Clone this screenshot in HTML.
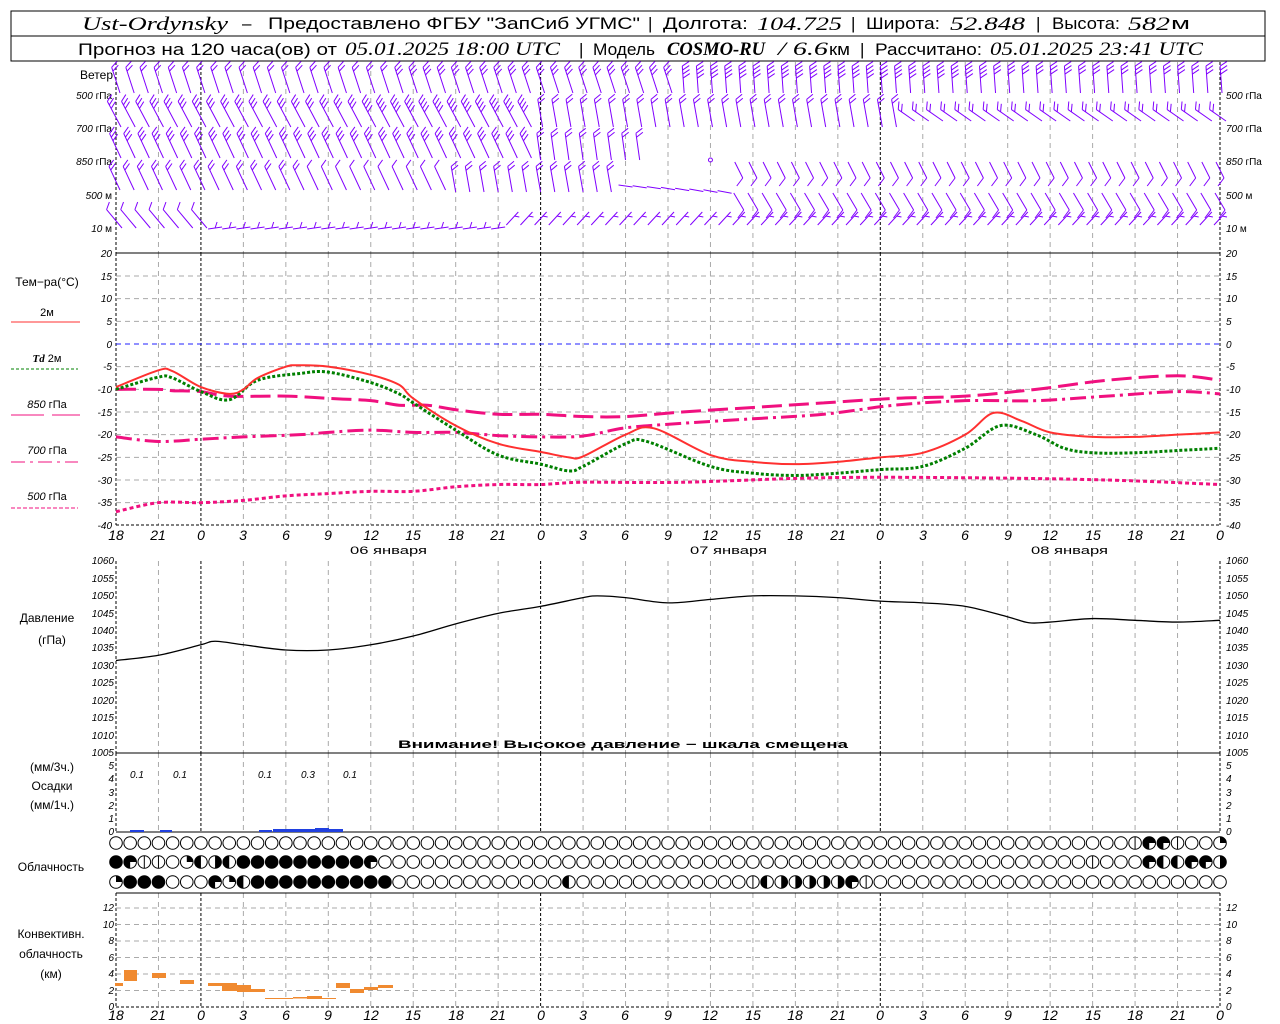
<!DOCTYPE html>
<html><head><meta charset="utf-8"><style>
body{margin:0;background:#fff;width:1280px;height:1024px;overflow:hidden;font-family:"Liberation Sans",sans-serif}
svg{position:absolute;left:0;top:0}
.t{font-family:"Liberation Sans",sans-serif;font-size:11px;fill:#000}
.n{font-family:"Liberation Sans",sans-serif;font-size:10px;font-style:italic;fill:#000}
.h{font-family:"Liberation Sans",sans-serif;font-size:14px;font-style:italic;fill:#000}
.hd{font-family:"Liberation Sans",sans-serif;font-size:17px;fill:#000}
.hi{font-family:"Liberation Serif",serif;font-size:19px;font-style:italic;fill:#000}
</style></head><body>
<svg id="s" width="1280" height="1024" xmlns="http://www.w3.org/2000/svg">
<g id="grid"></g>
<rect x="11" y="11" width="1254" height="50" fill="none" stroke="#000"/>
<line x1="11" y1="36" x2="1265" y2="36" stroke="#000"/>
<g lengthAdjust="spacingAndGlyphs">
<text x="82" y="30" class="hi" textLength="146" lengthAdjust="spacingAndGlyphs">Ust-Ordynsky</text>
<text x="242" y="29" class="hd">–</text>
<text x="268" y="29" class="hd" textLength="372" lengthAdjust="spacingAndGlyphs">Предоставлено ФГБУ "ЗапСиб УГМС"</text>
<text x="648" y="29" class="hd">|</text>
<text x="663" y="29" class="hd" textLength="85" lengthAdjust="spacingAndGlyphs">Долгота:</text>
<text x="757" y="30" class="hi" textLength="85" lengthAdjust="spacingAndGlyphs">104.725</text>
<text x="851" y="29" class="hd">|</text>
<text x="866" y="29" class="hd" textLength="74" lengthAdjust="spacingAndGlyphs">Широта:</text>
<text x="950" y="30" class="hi" textLength="75" lengthAdjust="spacingAndGlyphs">52.848</text>
<text x="1036" y="29" class="hd">|</text>
<text x="1052" y="29" class="hd" textLength="68" lengthAdjust="spacingAndGlyphs">Высота:</text>
<text x="1128" y="30" class="hi" textLength="42" lengthAdjust="spacingAndGlyphs">582</text>
<text x="1171" y="29" class="hd" textLength="19" lengthAdjust="spacingAndGlyphs">м</text>
<text x="78" y="55" class="hd" font-size="16" textLength="259" lengthAdjust="spacingAndGlyphs">Прогноз на 120 часа(ов) от</text>
<text x="345" y="55" class="hi" font-size="18" textLength="215" lengthAdjust="spacingAndGlyphs">05.01.2025 18:00 UTC</text>
<text x="579" y="55" class="hd" font-size="16">|</text>
<text x="593" y="55" class="hd" font-size="16" textLength="62" lengthAdjust="spacingAndGlyphs">Модель</text>
<text x="667" y="55" class="hi" font-style="normal" font-weight="bold" font-size="17" textLength="98" lengthAdjust="spacingAndGlyphs">COSMO-RU</text>
<text x="778" y="55" class="hi" font-size="18" textLength="50" lengthAdjust="spacingAndGlyphs">/ 6.6</text>
<text x="829" y="55" class="hd" font-size="16" textLength="21" lengthAdjust="spacingAndGlyphs">км</text>
<text x="860" y="55" class="hd" font-size="16">|</text>
<text x="875" y="55" class="hd" font-size="16" textLength="107" lengthAdjust="spacingAndGlyphs">Рассчитано:</text>
<text x="990" y="55" class="hi" font-size="18" textLength="213" lengthAdjust="spacingAndGlyphs">05.01.2025 23:41 UTC</text>
</g>

<g class="t" text-anchor="end">
<text x="113" y="79" font-size="12">Ветер</text>
<text x="112" y="99" class="n">500 <tspan font-style="normal">гПа</tspan></text>
<text x="112" y="132" class="n">700 <tspan font-style="normal">гПа</tspan></text>
<text x="112" y="165" class="n">850 <tspan font-style="normal">гПа</tspan></text>
<text x="112" y="199" class="n">500 <tspan font-style="normal">м</tspan></text>
<text x="112" y="232" class="n">10  <tspan font-style="normal">м</tspan></text>
</g>
<g class="n">
<text x="1226" y="99">500 <tspan font-style="normal">гПа</tspan></text>
<text x="1226" y="132">700 <tspan font-style="normal">гПа</tspan></text>
<text x="1226" y="165">850 <tspan font-style="normal">гПа</tspan></text>
<text x="1226" y="199">500 <tspan font-style="normal">м</tspan></text>
<text x="1226" y="232">10  <tspan font-style="normal">м</tspan></text>
</g>
<g class="t" text-anchor="middle">
<text x="47" y="286" font-size="12">Тем−ра(°C)</text>
<text x="47" y="316">2м</text>
<text x="47" y="362"><tspan font-style="italic" font-weight="bold" font-family="Liberation Serif">Td</tspan>  2м</text>
<text x="47" y="408"><tspan font-style="italic">850</tspan> гПа</text>
<text x="47" y="454"><tspan font-style="italic">700</tspan> гПа</text>
<text x="47" y="500"><tspan font-style="italic">500</tspan> гПа</text>
<text x="47" y="622" font-size="12">Давление</text>
<text x="52" y="644" font-size="12">(гПа)</text>
<text x="52" y="771" font-size="12">(мм/3ч.)</text>
<text x="52" y="790" font-size="12">Осадки</text>
<text x="52" y="809" font-size="12">(мм/1ч.)</text>
<text x="51" y="871" font-size="12">Облачность</text>
<text x="51" y="938" font-size="12">Конвективн.</text>
<text x="51" y="958" font-size="12">облачность</text>
<text x="51" y="978" font-size="12">(км)</text>
</g>
<line x1="11" y1="322" x2="80" y2="322" stroke="#ff3030" stroke-width="1"/>
<line x1="11" y1="369" x2="78" y2="369" stroke="#008000" stroke-dasharray="3,2"/>
<line x1="11" y1="415" x2="44" y2="415" stroke="#f0107f"/><line x1="52" y1="415" x2="80" y2="415" stroke="#f0107f"/>
<line x1="11" y1="462" x2="78" y2="462" stroke="#f0107f" stroke-dasharray="14,5,3,5"/>
<line x1="11" y1="508" x2="78" y2="508" stroke="#f0107f" stroke-dasharray="4,2"/>
<g class="n" text-anchor="end">
<text x="112" y="257">20</text><text x="112" y="280">15</text><text x="112" y="302">10</text><text x="112" y="325">5</text><text x="112" y="348">0</text><text x="112" y="370">-5</text><text x="112" y="393">-10</text><text x="112" y="416">-15</text><text x="112" y="438">-20</text><text x="112" y="461">-25</text><text x="112" y="484">-30</text><text x="112" y="506">-35</text><text x="112" y="529">-40</text>
</g>
<g class="n">
<text x="1226" y="257">20</text><text x="1226" y="280">15</text><text x="1226" y="302">10</text><text x="1226" y="325">5</text><text x="1226" y="348">0</text><text x="1226" y="370">-5</text><text x="1226" y="393">-10</text><text x="1226" y="416">-15</text><text x="1226" y="438">-20</text><text x="1226" y="461">-25</text><text x="1226" y="484">-30</text><text x="1226" y="506">-35</text><text x="1226" y="529">-40</text>
</g>
<g class="n" font-size="9" text-anchor="end">
<text x="114" y="564">1060</text><text x="114" y="582">1055</text><text x="114" y="599">1050</text><text x="114" y="617">1045</text><text x="114" y="634">1040</text><text x="114" y="651">1035</text><text x="114" y="669">1030</text><text x="114" y="686">1025</text><text x="114" y="704">1020</text><text x="114" y="721">1015</text><text x="114" y="739">1010</text><text x="114" y="756">1005</text>
<text x="114" y="769">5</text><text x="114" y="782">4</text><text x="114" y="796">3</text><text x="114" y="809">2</text><text x="114" y="822">1</text><text x="114" y="835">0</text>
<text x="114" y="911">12</text><text x="114" y="928">10</text><text x="114" y="944">8</text><text x="114" y="961">6</text><text x="114" y="977">4</text><text x="114" y="994">2</text><text x="114" y="1010">0</text>
</g>
<g class="n" font-size="9">
<text x="1226" y="564">1060</text><text x="1226" y="582">1055</text><text x="1226" y="599">1050</text><text x="1226" y="617">1045</text><text x="1226" y="634">1040</text><text x="1226" y="651">1035</text><text x="1226" y="669">1030</text><text x="1226" y="686">1025</text><text x="1226" y="704">1020</text><text x="1226" y="721">1015</text><text x="1226" y="739">1010</text><text x="1226" y="756">1005</text>
<text x="1226" y="769">5</text><text x="1226" y="782">4</text><text x="1226" y="796">3</text><text x="1226" y="809">2</text><text x="1226" y="822">1</text><text x="1226" y="835">0</text>
<text x="1226" y="911">12</text><text x="1226" y="928">10</text><text x="1226" y="944">8</text><text x="1226" y="961">6</text><text x="1226" y="977">4</text><text x="1226" y="994">2</text><text x="1226" y="1010">0</text>
</g>
<g class="h" text-anchor="middle">
<text x="116" y="540">18</text><text x="158" y="540">21</text><text x="201" y="540">0</text><text x="243" y="540">3</text><text x="286" y="540">6</text><text x="328" y="540">9</text><text x="371" y="540">12</text><text x="413" y="540">15</text><text x="456" y="540">18</text><text x="498" y="540">21</text><text x="541" y="540">0</text><text x="583" y="540">3</text><text x="625" y="540">6</text><text x="668" y="540">9</text><text x="710" y="540">12</text><text x="753" y="540">15</text><text x="795" y="540">18</text><text x="838" y="540">21</text><text x="880" y="540">0</text><text x="923" y="540">3</text><text x="965" y="540">6</text><text x="1008" y="540">9</text><text x="1050" y="540">12</text><text x="1093" y="540">15</text><text x="1135" y="540">18</text><text x="1178" y="540">21</text><text x="1220" y="540">0</text>
</g>
<g class="h" text-anchor="middle">
<text x="116" y="1020">18</text><text x="158" y="1020">21</text><text x="201" y="1020">0</text><text x="243" y="1020">3</text><text x="286" y="1020">6</text><text x="328" y="1020">9</text><text x="371" y="1020">12</text><text x="413" y="1020">15</text><text x="456" y="1020">18</text><text x="498" y="1020">21</text><text x="541" y="1020">0</text><text x="583" y="1020">3</text><text x="625" y="1020">6</text><text x="668" y="1020">9</text><text x="710" y="1020">12</text><text x="753" y="1020">15</text><text x="795" y="1020">18</text><text x="838" y="1020">21</text><text x="880" y="1020">0</text><text x="923" y="1020">3</text><text x="965" y="1020">6</text><text x="1008" y="1020">9</text><text x="1050" y="1020">12</text><text x="1093" y="1020">15</text><text x="1135" y="1020">18</text><text x="1178" y="1020">21</text><text x="1220" y="1020">0</text>
</g>
<g class="t" font-size="12">
<text x="350" y="554" textLength="77" lengthAdjust="spacingAndGlyphs">06 января</text><text x="690" y="554" textLength="77" lengthAdjust="spacingAndGlyphs">07 января</text><text x="1031" y="554" textLength="77" lengthAdjust="spacingAndGlyphs">08 января</text>
</g>
<text x="398" y="748" class="t" font-size="14" font-weight="bold" textLength="450" lengthAdjust="spacingAndGlyphs">Внимание! Высокое давление − шкала смещена</text>
<g class="n" font-size="13" text-anchor="middle">
<text x="137" y="778">0.1</text><text x="180" y="778">0.1</text><text x="265" y="778">0.1</text><text x="308" y="778">0.3</text><text x="350" y="778">0.1</text>
</g>
<g id="g2"></g>
</svg>
<script>
var NS="http://www.w3.org/2000/svg",G=document.getElementById("grid"),G2=document.getElementById("g2");
function X(h){return 116+h*14.1538}
function el(p,t,a){var e=document.createElementNS(NS,t);for(var k in a)e.setAttribute(k,a[k]);p.appendChild(e);return e}
function L(p,x1,y1,x2,y2,c,w,d){var a={x1:x1,y1:y1,x2:x2,y2:y2,stroke:c,"stroke-width":w||1};if(d)a["stroke-dasharray"]=d;return el(p,"line",a)}
var panels=[[62,253],[253,525],[561,753],[753,832],[893,1007]];
panels.forEach(function(p){for(var h=0;h<=78;h+=3){var day=(h==6||h==30||h==54||h==0||h==78);L(G,X(h),p[0],X(h),p[1],day?"#000":"#aaa",1,day?"3,2":"5,4")}});
for(var t=15;t>=-35;t-=5){var y=344-t*4.533;L(G,116,y,1220,y,t==0?"#2020ff":"#aaa",1,"5,4")}
for(var k=2;k<=12;k+=2){var y=1007-k*8.25;L(G,116,y,1220,y,"#aaa",1,"5,4")}
[253,753,832,893].forEach(function(y){L(G,116,y,1220,y,"#000",1)});
L(G,116,525,1220,525,"#000",1,"3,2");L(G,116,1007,1220,1007,"#000",1,"3,2");
function curve(pts,fy,attrs){var P=pts.map(function(q){return[X(q[0]),fy(q[1])]});var d="M"+P[0][0]+","+P[0][1];
for(var i=0;i<P.length-1;i++){var p0=P[i-1]||P[i],p1=P[i],p2=P[i+1],p3=P[i+2]||p2;
d+=" C"+(p1[0]+(p2[0]-p0[0])/6)+","+(p1[1]+(p2[1]-p0[1])/6)+" "+(p2[0]-(p3[0]-p1[0])/6)+","+(p2[1]-(p3[1]-p1[1])/6)+" "+p2[0]+","+p2[1]}
attrs.d=d;attrs.fill="none";el(G2,"path",attrs)}
function TY(t){return 344-t*4.533}
curve([[0,-37],[3,-35],[6,-35],[9,-34.5],[12,-33.5],[15,-33],[18,-32.5],[21,-32.5],[24,-31.5],[27,-31],[30,-31],[33,-30.5],[40,-30.5],[50,-29.5],[60,-29.5],[70,-30],[78,-31]],TY,{stroke:"#f0107f","stroke-width":3,"stroke-dasharray":"4,3"});
curve([[0,-20.5],[3,-21.5],[6,-21],[9,-20.5],[13,-20],[15,-19.5],[18,-19],[21,-19.5],[24,-19.5],[27,-20.2],[30,-20.5],[33,-20.3],[36,-18.5],[40,-17.5],[45,-16.5],[50,-15.5],[55,-13.5],[60,-12.5],[65,-12.5],[70,-11.5],[75,-10.5],[78,-11]],TY,{stroke:"#f0107f","stroke-width":3,"stroke-dasharray":"16,5,3,5"});
curve([[0,-10],[3,-10],[4,-10.3],[6,-10.5],[8,-11.5],[12,-11.5],[15,-12],[18,-12.5],[20,-13.5],[22,-13.5],[24,-14.5],[27,-15.5],[30,-15.5],[33,-16],[36,-16],[40,-15],[45,-14],[50,-13],[55,-12],[60,-11.5],[65,-10],[70,-8],[75,-7],[78,-8]],TY,{stroke:"#f0107f","stroke-width":3,"stroke-dasharray":"20,7"});
curve([[0,-10],[3,-7.3],[4,-7.5],[6,-10.5],[8,-12.3],[10,-8],[13,-6.5],[15,-6.2],[18,-8.5],[20,-11],[21,-13],[24,-19],[27,-24.5],[30,-26.5],[32,-28],[33,-27],[36,-22],[37.5,-21.5],[42,-27],[45,-28.5],[48,-29],[51,-28.5],[54,-27.7],[57,-27],[60,-23],[62.5,-18],[65,-20],[67,-23],[69,-24],[72,-24],[75,-23.5],[78,-23]],TY,{stroke:"#008000","stroke-width":3,"stroke-dasharray":"3,2"});
curve([[0,-9.5],[3,-5.8],[4,-6],[6,-9.5],[8,-11],[9,-10],[10,-7.5],[12,-5],[13,-4.7],[15,-5],[18,-6.8],[20,-9],[21,-12],[24,-18],[27,-22],[30,-23.8],[32,-25],[33,-24.8],[36,-20],[38,-18.6],[42,-24.5],[45,-26],[48,-26.5],[51,-26],[54,-25],[57,-24],[60,-20],[62,-15.2],[64,-17],[66,-19.5],[69,-20.5],[72,-20.5],[75,-20],[78,-19.5]],TY,{stroke:"#ff3030","stroke-width":2});
curve([[0,1031.5],[3,1033],[6,1036],[7,1037],[9,1036],[12,1034.5],[15,1034.5],[18,1036],[21,1038.5],[24,1042],[27,1045],[30,1047],[33,1049.5],[34,1050],[36,1049.5],[39,1048],[42,1049],[45,1050],[48,1050],[51,1049.5],[54,1048.5],[57,1048],[60,1047],[63,1044],[64.5,1042.3],[66,1042.5],[69,1043.5],[72,1043],[75,1042.5],[78,1043]],function(p){return 561+(1060-p)*3.49},{stroke:"#000","stroke-width":1.3});
// precip
[[130,830,14,2],[160,830,12,2],[259,830,13,2],[273,829,14,3],[287,829,14,3],[301,829,14,3],[315,828,14,4],[329,829,14,3]].forEach(function(r){el(G2,"rect",{x:r[0],y:r[1],width:r[2],height:r[3],fill:"#2040e0"})});
// convective
[[115,983,8,3],[124,970,13,11],[152,973,14,5],[180,980,14,4],[208,983,14,3],[222,983,15,8],[237,985,14,7],[251,989,14,3],[265,998,14,1],[279,998,14,1],[293,997,14,1.5],[307,996,15,3],[322,998,14,1],[336,983,14,5],[350,989,14,4],[364,987,14,3],[378,985,15,3]].forEach(function(r){el(G2,"rect",{x:r[0],y:r[1],width:r[2],height:r[3],fill:"#f08a30"})});
// clouds
function cl(x,y,t){var r=6.3;el(G2,"circle",{cx:x,cy:y,r:r,fill:t==4?"#000":"#fff",stroke:"#000","stroke-width":1});
if(t==2)el(G2,"path",{d:"M"+x+","+(y-r)+" A"+r+","+r+" 0 0 0 "+x+","+(y+r)+"Z",fill:"#000"});
if(t==5)el(G2,"path",{d:"M"+x+","+(y-r)+" A"+r+","+r+" 0 0 1 "+x+","+(y+r)+"Z",fill:"#000"});
if(t==1)el(G2,"path",{d:"M"+x+","+y+" L"+x+","+(y-r)+" A"+r+","+r+" 0 0 1 "+(x+r)+","+y+"Z",fill:"#000"});
if(t==3)el(G2,"path",{d:"M"+x+","+y+" L"+x+","+(y+r)+" A"+r+","+r+" 0 1 1 "+(x+r)+","+y+"Z",fill:"#000"});
if(t==9)L(G2,x,y-r,x,y+r,"#000",1)}
var R1={72:9,73:3,74:3,75:9,78:1};
var R2={0:4,1:3,2:9,3:9,5:1,6:2,7:5,8:2,18:3,69:9,73:3,74:2,75:2,76:3,77:3,78:5};for(var i=9;i<=17;i++)R2[i]=4;
var R3={0:1,1:4,2:4,3:4,7:3,8:1,9:2,32:2,45:9,46:2,47:5,48:5,49:5,50:5,51:5,52:3,53:9};for(var i=10;i<=19;i++)R3[i]=4;
for(var h=0;h<=78;h++){cl(X(h),843,R1[h]||0);cl(X(h),862,R2[h]||0);cl(X(h),882,R3[h]||0)}
// wind barbs
var C="#8000ff";
function fb(x,yb,ang,len,n,side){var a=ang*Math.PI/180,dx=-Math.sin(a),dy=-Math.cos(a);var tx=x+dx*len,ty=yb+dy*len;L(G2,x,yb,tx,ty,C,1);
var px=-dy*side,py=dx*side;for(var i=0;i<n;i++){var bx=tx-dx*i*4,by=ty-dy*i*4;L(G2,bx,by,bx+px*7+dx*4,by+py*7+dy*4,C,1)}}
for(var h=0;h<=78;h++){var x=X(h);
if(h<40)fb(x+4,93,18,27,h<20?2:3,1);else fb(x+2,93,4,27,h<62?4:3,1);
if(h<30)fb(x+5,127,28,29,h<18?3:4,1);else if(h<56)fb(x+2,127,10,28,2,1);else fb(x+6,121,55,20,2,1);
if(h<30)fb(x+5,158,25,27,3,1);else if(h<38)fb(x,160,8,27,2,1);else if(h<44){if(h==42)el(G2,"circle",{cx:x,cy:160,r:2,fill:"none",stroke:C})}else{L(G2,x-4,162,x+4,178,C,1);L(G2,x+4,178,x-2,186,C,1)}
if(h<24)fb(x+4,190,25,26,h<14?2:1,1);else if(h<36)fb(x,192,10,26,2,1);else if(h<44){L(G2,x-7,185+(h-36)*0.8,x+7,187+(h-36)*0.9,C,1)}else{L(G2,x-5,193,x+5,210,C,1);L(G2,x+5,210,x-1,218,C,1)}
if(h<7)fb(x+6,228,40,24,1,1);else if(h<28){L(G2,x-7,229,x+7,227,C,1);L(G2,x,228,x+2,222,C,1)}else{L(G2,x-6,225,x+6,212,C,1);L(G2,x+2,216,x+7,217,C,1)}
}
</script>
</body></html>
